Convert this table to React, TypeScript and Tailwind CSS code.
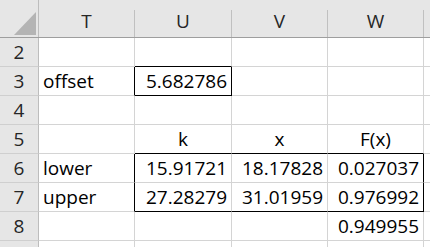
type Cell = { v?: string; align?: 'l' | 'r' | 'c'; r?: boolean; b?: boolean };

const cols = ['T', 'U', 'V', 'W'];

const rows: { n: number; cells: Cell[] }[] = [
  { n: 2, cells: [{}, { b: true }, {}, {}] },
  { n: 3, cells: [{ v: 'offset', r: true }, { v: '5.682786', align: 'r', r: true, b: true }, {}, {}] },
  { n: 4, cells: [{}, {}, {}, {}] },
  {
    n: 5,
    cells: [
      {},
      { v: 'k', align: 'c', b: true },
      { v: 'x', align: 'c', b: true },
      { v: 'F(x)', align: 'c', b: true },
    ],
  },
  {
    n: 6,
    cells: [
      { v: 'lower', r: true },
      { v: '15.91721', align: 'r' },
      { v: '18.17828', align: 'r' },
      { v: '0.027037', align: 'r', r: true },
    ],
  },
  {
    n: 7,
    cells: [
      { v: 'upper', r: true },
      { v: '27.28279', align: 'r', b: true },
      { v: '31.01959', align: 'r', b: true },
      { v: '0.976992', align: 'r', r: true, b: true },
    ],
  },
  { n: 8, cells: [{}, {}, {}, { v: '0.949955', align: 'r' }] },
];

const gridCols = 'grid grid-cols-[39px_96px_97px_96px_96px_6px]';

function DataCell({ cell }: { cell: Cell }) {
  const align =
    cell.align === 'r' ? 'justify-end pr-[4px]' : cell.align === 'c' ? 'justify-center' : 'justify-start pl-[4px]';
  return (
    <div
      className={`flex h-[29px] items-center border-r border-b leading-[28px] text-black ${align} ${
        cell.r ? 'border-r-black' : 'border-r-[#d4d4d4]'
      } ${cell.b ? 'border-b-black' : 'border-b-[#d4d4d4]'}`}
    >
      {cell.v}
    </div>
  );
}

export default function App() {
  return (
    <div
      className="h-[247px] w-[430px] overflow-hidden bg-white text-[19px]"
      style={{ fontFamily: '"Open Sans", "Liberation Sans", sans-serif' }}
    >
      <div className={`${gridCols} h-[38px] border-b border-b-[#9e9e9e] bg-[#e6e6e6]`}>
        <div className="flex items-end justify-end border-r border-r-[#bdbdbd] pr-[2px] pb-[2px]">
          <svg width="22" height="23" viewBox="0 0 22 23">
            <polygon points="22,0 22,23 0,23" fill="#b4b4b4" />
          </svg>
        </div>
        {cols.map((c) => (
          <div key={c} className="flex">
            <div className="flex flex-1 items-center justify-center pt-[6px] text-[#262626]">{c}</div>
            <div className="mt-[10px] w-px bg-[#c0c0c0]" />
          </div>
        ))}
        <div />
      </div>

      {rows.map((row) => (
        <div key={row.n} className={gridCols}>
          <div className="flex h-[29px] items-center justify-center border-r border-b border-r-[#bdbdbd] border-b-[#cfcfcf] bg-[#e6e6e6] leading-[28px] text-[#262626]">
            {row.n}
          </div>
          {row.cells.map((cell, i) => (
            <DataCell key={i} cell={cell} />
          ))}
          <div className="border-b border-b-[#d4d4d4]" />
        </div>
      ))}

      <div className={gridCols}>
        <div className="h-[6px] border-r border-r-[#bdbdbd] bg-[#e6e6e6]" />
        {cols.map((c) => (
          <div key={c} className="border-r border-r-[#d4d4d4]" />
        ))}
        <div />
      </div>
    </div>
  );
}
